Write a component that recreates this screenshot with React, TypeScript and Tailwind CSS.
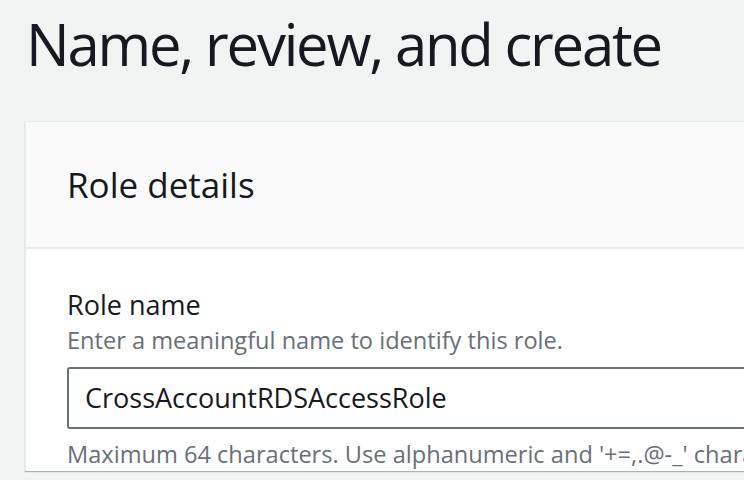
export default function App() {
  return (
    <div className="min-h-[480px] w-full overflow-hidden bg-[#f2f3f3] font-['Open_Sans',sans-serif] text-[#16191f]">
      <h1 className="pl-[26px] pt-[8px] text-[58px] leading-[72px] font-medium tracking-[-2.2px] whitespace-nowrap">
        Name, review, and create
      </h1>

      <section className="ml-[25px] mt-[41px] w-[800px] border-l border-t border-[#eaeded] bg-white shadow-[0_1px_1px_0_rgba(0,28,36,0.3)]">
        <div className="flex h-[127px] items-center border-b-2 border-[#eaeded] bg-[#fafafa] pl-[41px]">
          <h2 className="text-[35px] leading-none font-normal">Role details</h2>
        </div>

        <div className="pl-[41px] pt-[38px]">
          <label className="block text-[27px] leading-[36px]">Role name</label>
          <p className="text-[23.6px] leading-[34px] text-[#687078] whitespace-nowrap">
            Enter a meaningful name to identify this role.
          </p>
          <div className="mt-[10px] flex h-[62px] w-[760px] items-center rounded-[3px] border-2 border-[#687078] pl-[16px] text-[27px]">
            CrossAccountRDSAccessRole
          </div>
          <p className="mt-[8px] text-[23.6px] leading-[34px] text-[#687078] whitespace-nowrap">
            Maximum 64 characters. Use alphanumeric and '+=,.@-_' characters.
          </p>
        </div>
      </section>
    </div>
  );
}
